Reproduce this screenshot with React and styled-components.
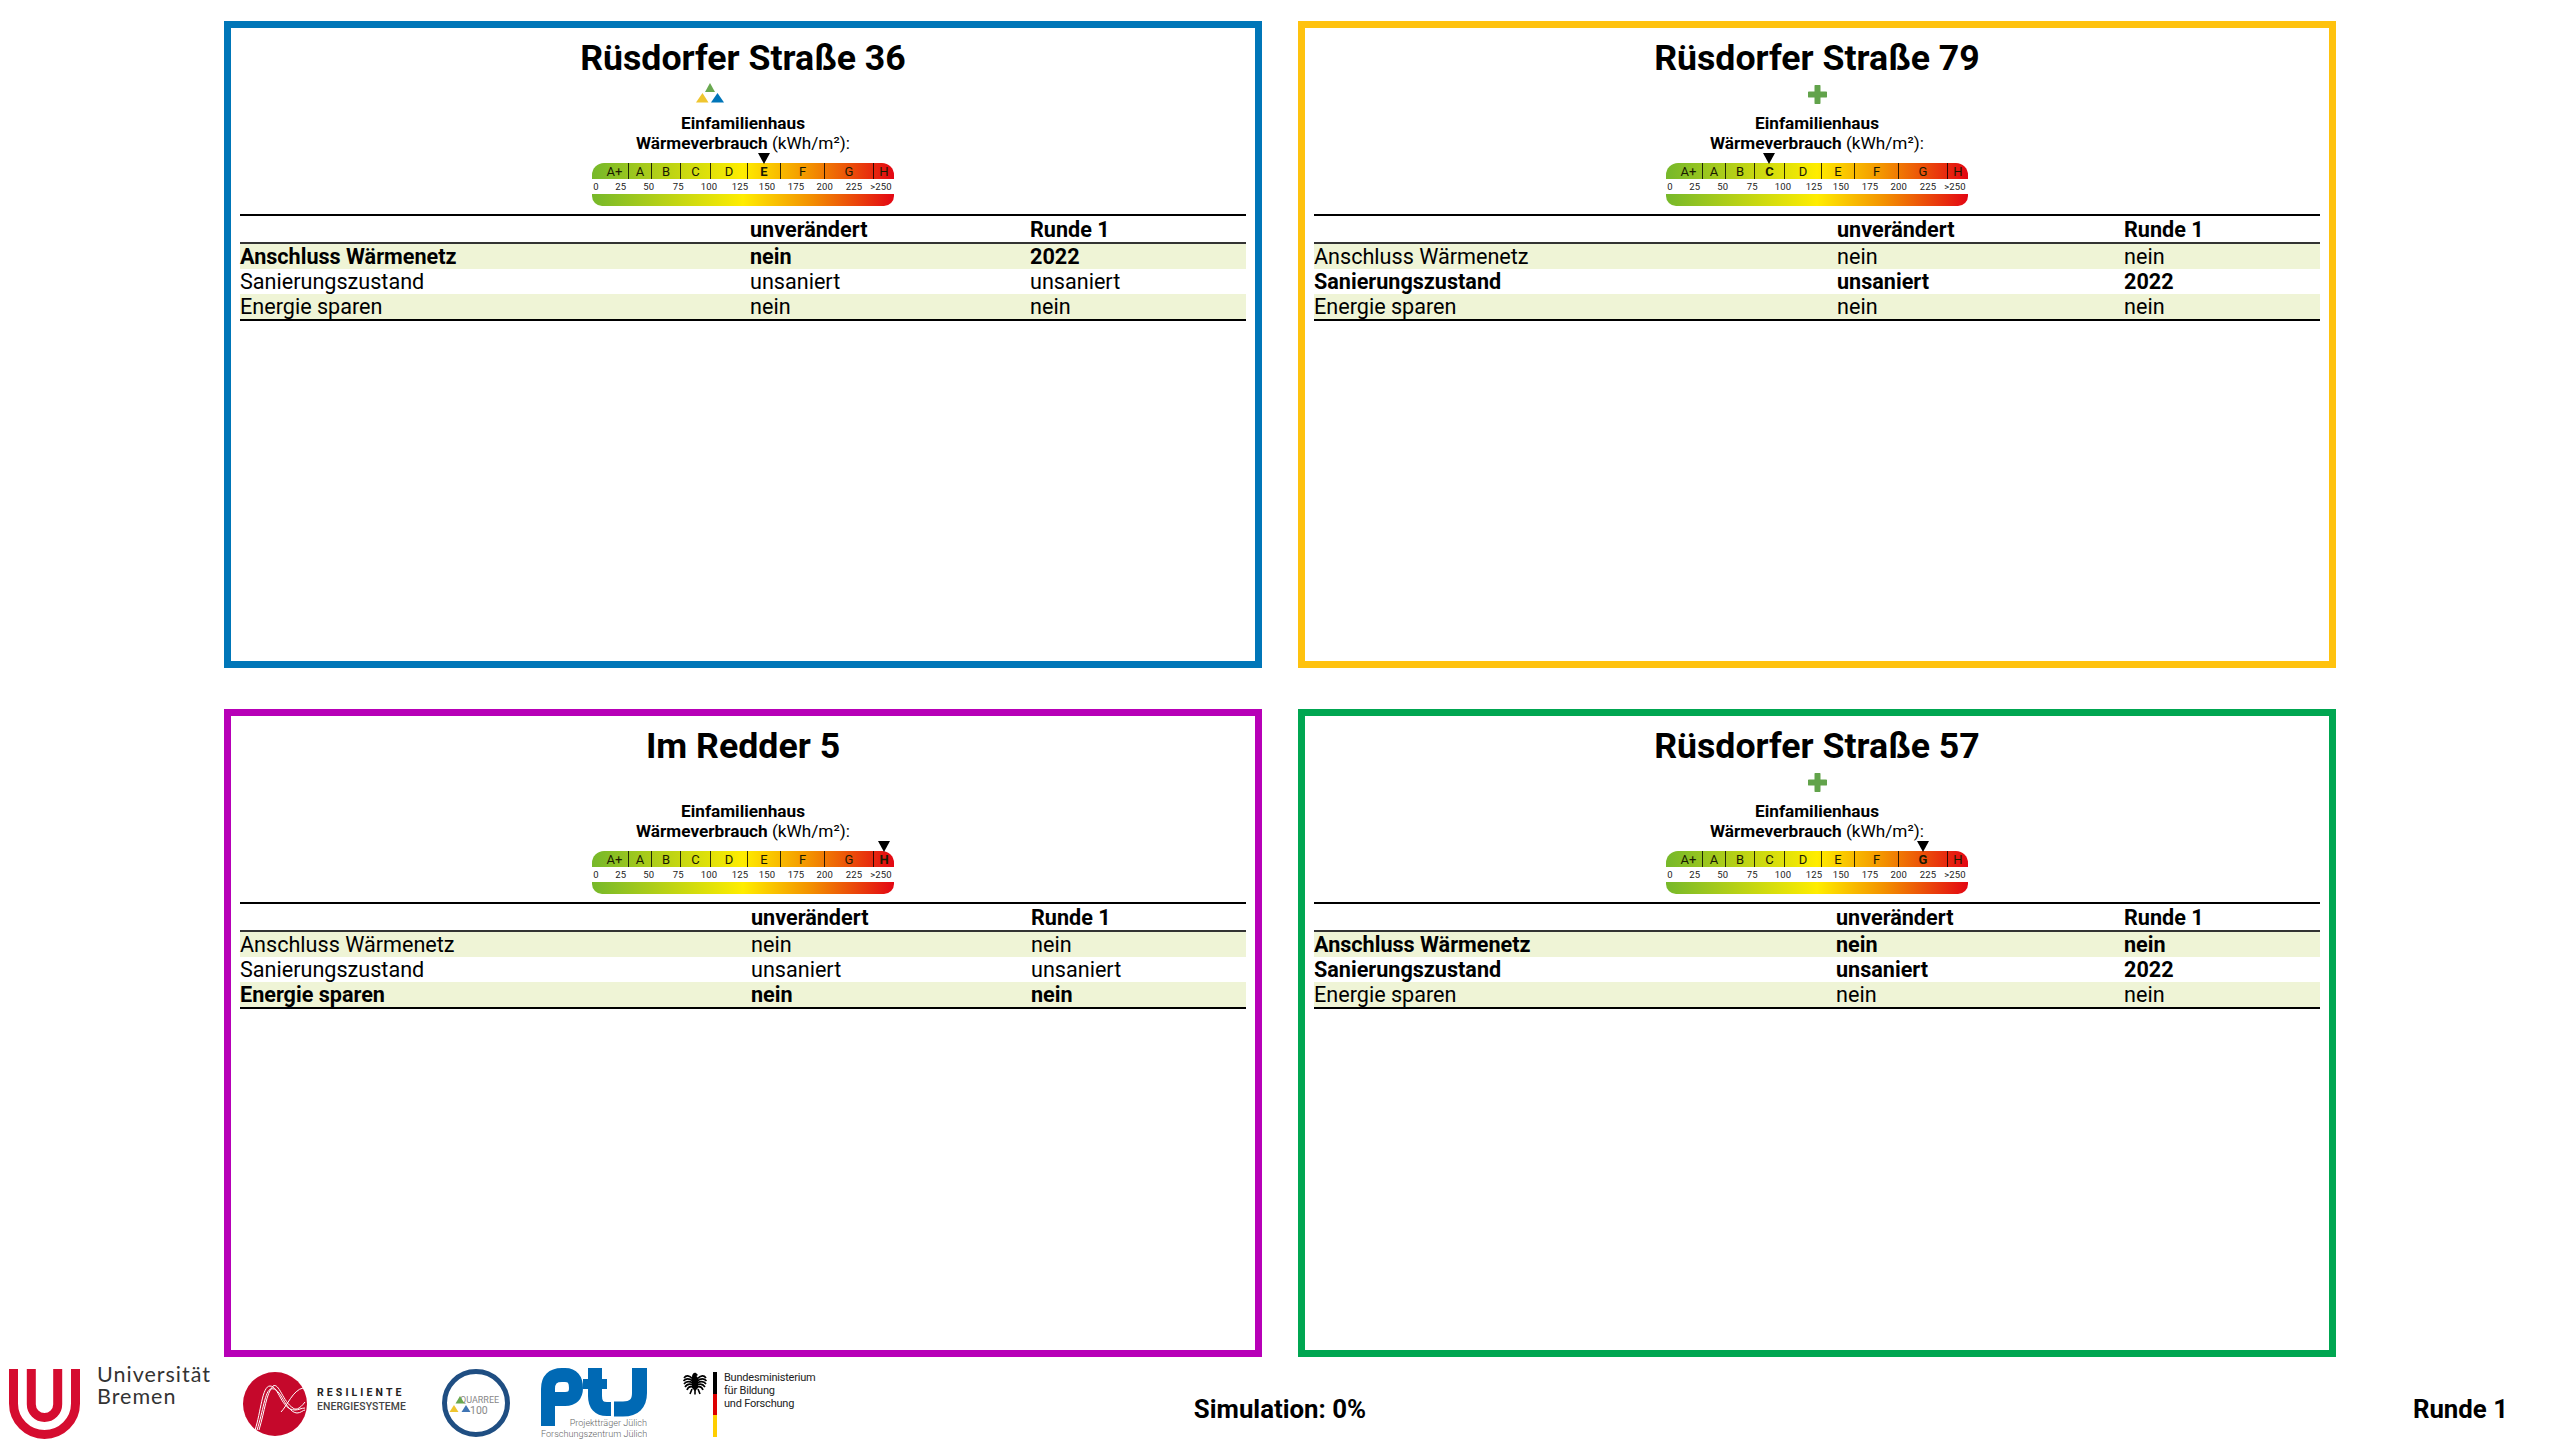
import React from 'react';
import styled, { createGlobalStyle } from 'styled-components';

const Global = createGlobalStyle`
  html, body { margin: 0; padding: 0; background: #fff; color: #000; font-family: Roboto, "Liberation Sans", sans-serif; }
`;

const Page = styled.div`
  width: 2560px; height: 1440px; overflow: hidden;
  display: flex; flex-direction: column;
`;
const Grid = styled.main`
  margin: 21px auto 0;
  display: grid;
  grid-template-columns: 1038px 1038px;
  grid-template-rows: 647px 648px;
  column-gap: 36px; row-gap: 41px;
`;
const Panel = styled.section`
  box-sizing: border-box;
  border: 7px solid ${p => p.$color};
  padding: 0 9px;
  display: flex; flex-direction: column; align-items: center;
`;
const Title = styled.h2`
  margin: 0; height: 45px; padding-top: 5px; line-height: 50px;
  font-size: 35.7px; font-weight: 700; letter-spacing: 0;
`;
const IconSlot = styled.div`
  height: 35px; width: 100%;
  display: flex; justify-content: center; align-items: flex-start; padding-top: 7px; box-sizing: border-box;
`;
const Label = styled.div`
  height: 20px; line-height: 20px; font-size: 17.2px; font-weight: ${p => p.$weight || 400}; text-align: center; white-space: nowrap;
`;
const Strong = styled.span`font-weight: 700;`;
const BarWrap = styled.div`
  width: 302px; margin-top: 10px;
  display: flex; flex-direction: column;
`;
const Scale = styled.div`
  display: flex; height: 16px;
  border-radius: 12px 12px 0 0;
  background: linear-gradient(90deg, #76b82a 0%, #ffed00 50%, #f39200 72%, #e30613 100%);
`;
const Segment = styled.div`
  position: relative; box-sizing: border-box;
  width: ${p => p.$w}px;
  padding-left: ${p => p.$pad || 0}px;
  border-left: ${p => p.$first ? 'none' : '1.5px solid rgba(0,0,0,.8)'};
  text-align: center; font-size: 13px; line-height: 17px;
  font-weight: ${p => p.$active ? 700 : 400};
  color: #1a1a00;
`;
const Marker = styled.span`
  position: absolute; bottom: 100%; left: 50%; margin-left: -6.5px; margin-bottom: -1px;
  width: 0; height: 0;
  border-left: 6.5px solid transparent; border-right: 6.5px solid transparent;
  border-top: 11px solid #000;
`;
const Ticks = styled.div`
  display: flex; height: 15px; align-items: center;
`;
const Tick = styled.span`
  width: 0; margin-left: ${p => p.$gap}px;
  display: flex; justify-content: center;
  font-size: 9.5px; line-height: 15px; letter-spacing: .1px; color: #222; white-space: nowrap;
`;
const Band = styled.div`
  height: 12px;
  border-radius: 0 0 10px 10px;
  background: linear-gradient(90deg, #76b82a 0%, #ffed00 50%, #f39200 72%, #e30613 100%);
`;
const Table = styled.table`
  width: 100%; margin-top: 8px;
  table-layout: fixed;
  border-collapse: collapse;
  font-size: 21.6px; line-height: 25px;
  border-bottom: 2px solid #000;
`;
const Col = styled.col`
  width: ${p => p.$w}px;
`;
const HeadCell = styled.th`
  padding: 0; height: 26px; text-align: left; font-weight: 700; white-space: nowrap;
  border-top: 2px solid #000; border-bottom: 2px solid #333;
`;
const Row = styled.tr`
  background: ${p => p.$band ? '#eff4d6' : '#fff'};
  font-weight: ${p => p.$bold ? 700 : 400};
`;
const Cell = styled.td`
  padding: 0; height: 25px; white-space: nowrap;
`;

const Footer = styled.footer`
  flex: 1; display: grid; grid-template-columns: 1fr auto 1fr; align-items: center;
`;
const Logos = styled.div`
  display: flex; align-items: flex-start; padding-left: 9px; padding-top: 12px;
`;
const LogoUni = styled.div`display: flex; gap: 17px;`;
const UniText = styled.div`
  font-family: Lato, Roboto, sans-serif; font-size: 21.5px; line-height: 22px; color: #333;
  letter-spacing: 1px; margin-top: -6px;
`;
const LogoRes = styled.div`
  display: flex; align-items: center; gap: 10px; margin: 3px 0 0 32px;
`;
const ResText = styled.div`
  display: flex; flex-direction: column; gap: 2px; margin-bottom: 8px;
`;
const ResTop = styled.span`font-size: 10.5px; line-height: 12px; font-weight: 700; letter-spacing: 3.1px; color: #222;`;
const ResBot = styled.span`font-size: 10.4px; line-height: 12px; font-weight: 500; color: #444; letter-spacing: .1px;`;
const LogoQuarree = styled.svg`margin: 0 0 0 36px; display: block;`;
const LogoPtj = styled.svg`margin-left: 31px; display: block; margin-top: -1px;`;
const LogoBmbf = styled.div`
  display: flex; margin: 3px 0 0 36px;
`;
const Flag = styled.div`
  width: 4px; height: 65px; margin: 0 7px 0 6px;
  background: linear-gradient(180deg, #000 0 33.3%, #d00 33.3% 66.6%, #ffce00 66.6% 100%);
`;
const BmbfText = styled.div`
  font-size: 11px; line-height: 13px; color: #222; letter-spacing: -.2px; margin-top: -1px;
`;
const Sim = styled.div`
  font-size: 25.8px; font-weight: 700; white-space: nowrap; padding-top: 21px;
`;
const RoundLabel = styled.div`
  justify-self: end; padding: 21px 52px 0 0; font-size: 25.8px; font-weight: 700;
`;
const ShiftedIcon = styled.svg`margin: -2px 66px 0 0; display: block;`;

const QuarreeIcon = () => (
  <ShiftedIcon width="28" height="20" viewBox="0 0 28 20">
    <path d="M14 0 L19 9 H9 Z" fill="#69a84f" />
    <path d="M6.5 10 L12.5 19.5 H0 Z" fill="#efc52f" />
    <path d="M21.5 10 L28 19.5 H15 Z" fill="#0075b8" />
  </ShiftedIcon>
);
const PlusIcon = () => (
  <svg width="19" height="19" viewBox="0 0 19 19">
    <path d="M9.5 1.5 V17.5 M1.5 9.5 H17.5" stroke="#62a34b" strokeWidth="6" strokeLinecap="round" fill="none" />
  </svg>
);

const segs = [
  ['A+', 36, 9], ['A', 23], ['B', 29], ['C', 30], ['D', 37], ['E', 33], ['F', 44], ['G', 49], ['H', 21],
];
const ticks = [
  ['0', 4], ['25', 24.7], ['50', 28], ['75', 29.6], ['100', 30.7], ['125', 31], ['150', 27], ['175', 29], ['200', 28.7], ['225', 29.3], ['>250', 27],
];

const EnergyBar = ({ active }) => (
  <BarWrap>
    <Scale>
      {segs.map(([t, w, pad], i) => (
        <Segment key={t} $w={w} $pad={pad} $first={i === 0} $active={t === active}>
          {t === active && <Marker />}
          {t}
        </Segment>
      ))}
    </Scale>
    <Ticks>{ticks.map(([t, g]) => <Tick key={t} $gap={g}>{t}</Tick>)}</Ticks>
    <Band />
  </BarWrap>
);

const Building = ({ color, title, icon, active, rows, cols }) => (
  <Panel $color={color}>
    <Title>{title}</Title>
    <IconSlot>{icon}</IconSlot>
    <Label $weight={700}>Einfamilienhaus</Label>
    <Label><Strong>Wärmeverbrauch</Strong> (kWh/m²):</Label>
    <EnergyBar active={active} />
    <Table>
      <colgroup>{cols.map((w, i) => <Col key={i} $w={w} />)}</colgroup>
      <thead>
        <tr><HeadCell /><HeadCell>unverändert</HeadCell><HeadCell>Runde 1</HeadCell></tr>
      </thead>
      <tbody>
        {rows.map((r, i) => (
          <Row key={r.n} $band={i % 2 === 0} $bold={r.b}>
            <Cell>{r.n}</Cell><Cell>{r.u}</Cell><Cell>{r.r}</Cell>
          </Row>
        ))}
      </tbody>
    </Table>
  </Panel>
);

const A = 'Anschluss Wärmenetz', S = 'Sanierungszustand', E = 'Energie sparen';
const buildings = [
  { color: '#0076b8', title: 'Rüsdorfer Straße 36', icon: <QuarreeIcon />, active: 'E', cols: [510, 280, 216], rows: [
    { n: A, u: 'nein', r: '2022', b: true }, { n: S, u: 'unsaniert', r: 'unsaniert' }, { n: E, u: 'nein', r: 'nein' } ] },
  { color: '#ffc20e', title: 'Rüsdorfer Straße 79', icon: <PlusIcon />, active: 'C', cols: [523, 287, 196], rows: [
    { n: A, u: 'nein', r: 'nein' }, { n: S, u: 'unsaniert', r: '2022', b: true }, { n: E, u: 'nein', r: 'nein' } ] },
  { color: '#b700b7', title: 'Im Redder 5', icon: null, active: 'H', cols: [511, 280, 215], rows: [
    { n: A, u: 'nein', r: 'nein' }, { n: S, u: 'unsaniert', r: 'unsaniert' }, { n: E, u: 'nein', r: 'nein', b: true } ] },
  { color: '#00a651', title: 'Rüsdorfer Straße 57', icon: <PlusIcon />, active: 'G', cols: [522, 288, 196], rows: [
    { n: A, u: 'nein', r: 'nein', b: true }, { n: S, u: 'unsaniert', r: '2022', b: true }, { n: E, u: 'nein', r: 'nein' } ] },
];

const UniMark = () => (
  <svg width="71" height="70" viewBox="0 0 71 70" fill="none" stroke="#d50c2f" strokeWidth="9">
    <path d="M4.5 0 V34.5 A31 31 0 0 0 66.5 34.5 V0" />
    <path d="M22.3 0 V35.3 A13.2 13.2 0 0 0 48.7 35.3 V0" />
  </svg>
);
const ResMark = () => (
  <svg width="64" height="64" viewBox="0 0 64 64">
    <circle cx="32" cy="32" r="32" fill="#c5082b" />
    <g fill="none" stroke="#fff" strokeWidth="1">
      <path d="M12 58 C18 40 19 14 27 14 C36 14 38 38 52 38 C56 38 58 36 62 36" />
      <path d="M14 58 C20 40 22 18 28 17 C38 14 42 40 54 41 C58 41 60 38 62 38" />
      <path d="M16 58 C22 38 23 22 30 14 C36 10 40 30 50 36 C52 38 56 38 62 30" />
      <path d="M38 40 C44 34 50 18 60 16" />
    </g>
  </svg>
);
const Eagle = () => (
  <svg width="24" height="23" viewBox="0 0 24 23">
    <g stroke="#000" strokeWidth="1.6" fill="none">
      <path d="M10 7 C6 3 3 3 1 6 M10 9 C6 6 3 6 .5 9 M10 11 C6 9 3 9 1 12 M10 13 C6 11 4 12 2 15 M10 15 C7 14 5 15 4 18" />
      <path d="M14 7 C18 3 21 3 23 6 M14 9 C18 6 21 6 23.5 9 M14 11 C18 9 21 9 23 12 M14 13 C18 11 20 12 22 15 M14 15 C17 14 19 15 20 18" />
      <path d="M9 17 L7 22 M12 18 V22.5 M15 17 L17 22" />
    </g>
    <path d="M9 5 C9 2 11 0 13 1 L15 3 L13.5 4 L15 6 L15 16 L12 19 L9 16 Z" fill="#000" />
  </svg>
);

export default function App() {
  return (
    <Page>
      <Global />
      <Grid>
        {buildings.map(b => <Building key={b.title} {...b} />)}
      </Grid>
      <Footer>
        <Logos>
          <LogoUni>
            <UniMark />
            <UniText>Universität<br />Bremen</UniText>
          </LogoUni>
          <LogoRes>
            <ResMark />
            <ResText>
              <ResTop>RESILIENTE</ResTop>
              <ResBot>ENERGIESYSTEME</ResBot>
            </ResText>
          </LogoRes>
          <LogoQuarree width="68" height="68" viewBox="0 0 68 68">
            <circle cx="34" cy="34" r="31.5" fill="none" stroke="#1f4e82" strokeWidth="5" />
            <text x="18" y="34" fontSize="9" fill="#888" fontFamily="Roboto">QUARREE</text>
            <text x="28" y="45" fontSize="10.5" fill="#888" fontFamily="Roboto">100</text>
            <path d="M18 27 L22.5 34.5 H13.5 Z" fill="#69a84f" />
            <path d="M12 36 L16.5 43 H7.5 Z" fill="#efc52f" />
            <path d="M24 36 L28.5 43 H19.5 Z" fill="#3f74b4" />
          </LogoQuarree>
          <LogoPtj width="106" height="72" viewBox="0 0 106 72">
            <g fill="none" stroke="#0069b4" strokeWidth="14">
              <path d="M7 58 V21 Q7 7 21 7 H24 Q35 7 35 20 Q35 31 24 31 H14" />
              <path d="M54 0 V28 Q54 41 66 41 H70" />
              <path d="M42 16 H66" strokeWidth="10" />
              <path d="M98.5 0 V25 Q98.5 41 82 41 H73" strokeWidth="15" />
            </g>
            <text x="106" y="57.5" fontSize="9.1" textAnchor="end" fill="#666" fontFamily="Roboto" fontWeight="300">Projektträger Jülich</text>
            <text x="0" y="69" fontSize="9.1" fill="#666" fontFamily="Roboto" fontWeight="300">Forschungszentrum Jülich</text>
          </LogoPtj>
          <LogoBmbf>
            <Eagle />
            <Flag />
            <BmbfText>Bundesministerium<br />für Bildung<br />und Forschung</BmbfText>
          </LogoBmbf>
        </Logos>
        <Sim>Simulation: 0%</Sim>
        <RoundLabel>Runde 1</RoundLabel>
      </Footer>
    </Page>
  );
}
